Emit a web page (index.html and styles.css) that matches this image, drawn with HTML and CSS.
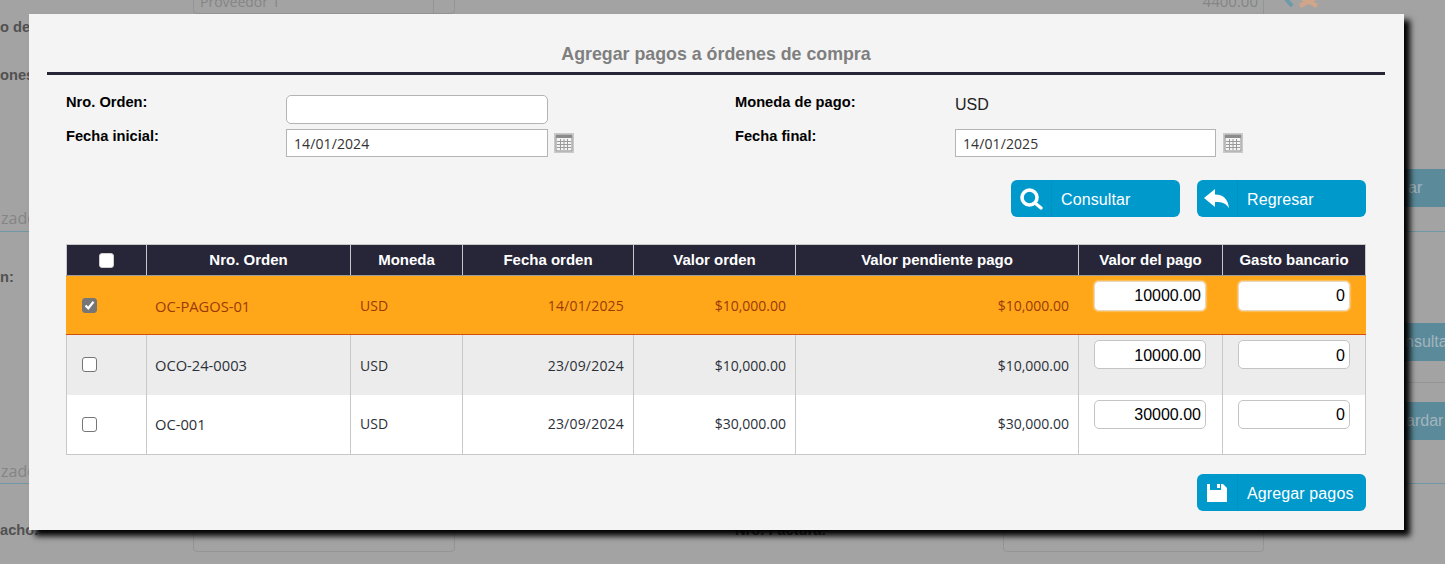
FILE: index.html
```html
<!DOCTYPE html>
<html lang="es">
<head>
<meta charset="utf-8">
<title>Agregar pagos a órdenes de compra</title>
<link rel="stylesheet" href="styles.css">
</head>
<body>
<div class="backdrop" aria-hidden="true">
  <span class="bg-text bg-l1">o de</span>
  <span class="bg-text bg-l2">ones</span>
  <span class="bg-soft bg-l3">zado</span>
  <span class="bg-text bg-l4">n:</span>
  <span class="bg-soft bg-l5">zado</span>
  <span class="bg-text bg-l6">acho.</span>
  <i class="bg-line bg-line1"></i>
  <i class="bg-line bg-line2"></i>
  <i class="bg-field bg-f1"><span>Proveedor 1</span></i>
  <i class="bg-field bg-f2"><span>4400.00</span></i>
  <i class="bg-field bg-f3"></i>
  <i class="bg-field bg-f4"></i>
  <span class="bg-text bg-mid">Nro. Factura:</span>
  <svg class="bg-icons" width="36" height="8" viewBox="0 0 36 8"><path d="M3 -1l6 7" stroke="#6d9aa8" stroke-width="4"/><path d="M17 -3l17 9M34 -3L17 6" stroke="#d0a58a" stroke-width="4.500"/></svg>
  <b class="bg-btn bg-b1">ar</b>
  <b class="bg-btn bg-b2">nsulta</b>
  <b class="bg-btn bg-b3">ardar</b>
  <i class="bg-line bg-line3"></i>
  <i class="bg-line bg-line4"></i>
  <i class="bg-line bg-line5"></i>
</div>

<section class="modal">
  <h1 class="modal-title">Agregar pagos a órdenes de compra</h1>

  <div class="filters">
    <label class="field-label">Nro. Orden:</label>
    <input class="txt round" type="text">
    <label class="field-label">Moneda de pago:</label>
    <div class="static-value">USD</div>

    <label class="field-label">Fecha inicial:</label>
    <div class="date-wrap">
      <input class="txt date" type="text" value="14/01/2024">
      <svg class="cal" width="20" height="20" viewBox="0 0 20 20"><rect x=".5" y=".5" width="19" height="19" fill="#e3e3e3" stroke="#c9c9c9"/><rect x="2" y="2" width="16" height="16" fill="#f4f4f4" stroke="#8b8b8b"/><rect x="2" y="2" width="16" height="3" fill="#8b8b8b"/><path d="M3 8.500h14M3 11.500h14M3 14.500h14M6.500 6v11M10 6v11M13.500 6v11" stroke="#9a9a9a" fill="none"/></svg>
    </div>
    <label class="field-label">Fecha final:</label>
    <div class="date-wrap wide-gap">
      <input class="txt date narrow" type="text" value="14/01/2025">
      <svg class="cal" width="20" height="20" viewBox="0 0 20 20"><rect x=".5" y=".5" width="19" height="19" fill="#e3e3e3" stroke="#c9c9c9"/><rect x="2" y="2" width="16" height="16" fill="#f4f4f4" stroke="#8b8b8b"/><rect x="2" y="2" width="16" height="3" fill="#8b8b8b"/><path d="M3 8.500h14M3 11.500h14M3 14.500h14M6.500 6v11M10 6v11M13.500 6v11" stroke="#9a9a9a" fill="none"/></svg>
    </div>
  </div>

  <div class="actions">
    <button class="btn" type="button">
      <span class="btn-icon"><svg width="24" height="24" viewBox="0 0 24 24"><circle cx="10.500" cy="10.500" r="7.500" fill="none" stroke="#fff" stroke-width="3.600"/><path d="M16 16l6 5" stroke="#fff" stroke-width="3.400" stroke-linecap="round"/></svg></span>
      <span class="btn-label">Consultar</span>
    </button>
    <button class="btn" type="button">
      <span class="btn-icon"><svg width="26" height="20" viewBox="0 0 26 20"><path d="M0 9L11 0v5.500c8 0 13 4 14 14-2.500-5-6-6.500-14-6.500v5z" fill="#fff"/></svg></span>
      <span class="btn-label">Regresar</span>
    </button>
  </div>

  <table class="grid">
    <colgroup>
      <col class="c1"><col class="c2"><col class="c3"><col class="c4"><col class="c5"><col class="c6"><col class="c7"><col class="c8">
    </colgroup>
    <thead>
      <tr>
        <th><span class="check head-check"></span></th>
        <th>Nro. Orden</th>
        <th>Moneda</th>
        <th>Fecha orden</th>
        <th>Valor orden</th>
        <th>Valor pendiente pago</th>
        <th>Valor del pago</th>
        <th>Gasto bancario</th>
      </tr>
    </thead>
    <tbody>
      <tr class="selected">
        <td class="ctr"><span class="check checked"><svg width="11" height="10" viewBox="0 0 11 10"><path d="M1.500 5.500l2.800 2.800 5.200-6.600" fill="none" stroke="#fff" stroke-width="2.200"/></svg></span></td>
        <td class="code">OC-PAGOS-01</td>
        <td>USD</td>
        <td class="num date-cell">14/01/2025</td>
        <td class="num">$10,000.00</td>
        <td class="num">$10,000.00</td>
        <td class="inp"><input class="cell-input" type="text" value="10000.00"></td>
        <td class="inp"><input class="cell-input" type="text" value="0"></td>
      </tr>
      <tr class="alt">
        <td class="ctr"><span class="check"></span></td>
        <td class="code">OCO-24-0003</td>
        <td>USD</td>
        <td class="num date-cell">23/09/2024</td>
        <td class="num">$10,000.00</td>
        <td class="num">$10,000.00</td>
        <td class="inp"><input class="cell-input" type="text" value="10000.00"></td>
        <td class="inp"><input class="cell-input" type="text" value="0"></td>
      </tr>
      <tr class="plain">
        <td class="ctr"><span class="check"></span></td>
        <td class="code">OC-001</td>
        <td>USD</td>
        <td class="num date-cell">23/09/2024</td>
        <td class="num">$30,000.00</td>
        <td class="num">$30,000.00</td>
        <td class="inp"><input class="cell-input" type="text" value="30000.00"></td>
        <td class="inp"><input class="cell-input" type="text" value="0"></td>
      </tr>
    </tbody>
  </table>

  <div class="actions bottom">
    <button class="btn" type="button">
      <span class="btn-icon"><svg width="20" height="20" viewBox="0 0 20 20"><path d="M0 1h3v6h11V1h2l4 4v14H0z" fill="#fff"/><rect x="10" y="1" width="3" height="4" fill="#fff"/></svg></span>
      <span class="btn-label">Agregar pagos</span>
    </button>
  </div>
</section>
</body>
</html>
```
FILE: styles.css
```css
* { box-sizing: border-box; }
html, body { margin: 0; height: 564px; overflow: hidden; }
body { background: #a3a3a3; font-family: "Liberation Sans", Arial, sans-serif; position: relative; }

/* dimmed page behind the dialog */
.backdrop { position: absolute; inset: 0; overflow: hidden; }
.backdrop > * { position: absolute; }
.bg-text { font-size: 14.670px; font-weight: 700; color: #515151; line-height: 16px; white-space: nowrap; }
.bg-soft { font-family: "Open Sans", sans-serif; font-size: 16px; color: #858585; line-height: 18px; }
.bg-l1 { left: 0; top: 19px; }
.bg-l2 { left: 0; top: 67px; }
.bg-l3 { left: 1px; top: 209px; }
.bg-l4 { left: 0; top: 269px; }
.bg-l5 { left: 1px; top: 462px; }
.bg-l6 { left: 0; top: 522px; }
.bg-mid { left: 735px; top: 522px; color: #333; }
.bg-line { height: 1px; background: #6f97a6; }
.bg-line1 { left: 0; top: 231px; width: 29px; }
.bg-line2 { left: 0; top: 483px; width: 29px; }
.bg-line3 { left: 1404px; top: 231px; width: 41px; }
.bg-line4 { left: 1404px; top: 382px; width: 41px; background: #959595; }
.bg-line5 { left: 1404px; top: 483px; width: 41px; }
.bg-field { width: 262px; border: 1px solid #959595; border-radius: 4px; font-style: normal; font-family: "Open Sans", sans-serif; font-size: 14px; color: #858585; }
.bg-f1 { left: 193px; top: -14px; height: 28px; padding: 5px 6px; line-height: 20px; }
.bg-f1::after { content: ""; position: absolute; left: 239px; top: 0; bottom: 0; width: 1px; background: #959595; }
.bg-f2 { left: 1003px; top: -14px; height: 28px; width: 261px; padding: 5px 5px; font-size: 15px; line-height: 20px; text-align: right; border-top: 0; border-left: 0; border-bottom: 0; border-radius: 0; }
.bg-f3 { left: 193px; top: 524px; height: 28px; }
.bg-f4 { left: 1003px; top: 524px; height: 28px; width: 261px; }
.bg-icons { left: 1283px; top: 0; }
.bg-btn { left: 1404px; width: 41px; height: 38px; background: #5b8a9b; font-weight: 400; font-size: 16px; line-height: 38px; color: #a3b5bc; white-space: nowrap; overflow: hidden; }
.bg-b1 { top: 169px; padding-left: 4px; }
.bg-b2 { top: 323px; padding-left: 1px; }
.bg-b3 { top: 402px; padding-left: 2px; }

/* dialog */
.modal {
  position: absolute; left: 29px; top: 14px;
  width: 1375px; height: 516px;
  padding: 0 19px 0 18px;
  background: #f4f4f4;
  box-shadow: 6px 6px 6px #000;
  color: #000;
}
.modal-title {
  margin: 0;
  height: 61px;
  padding-top: 30px;
  border-bottom: 3px solid #272639;
  font-size: 17.800px; line-height: 20px; font-weight: 700;
  color: #7f7f7f; text-align: center;
}

.filters {
  display: grid;
  grid-template-columns: 220px 449px 220px 1fr;
  grid-template-rows: 29px 28px;
  row-gap: 5px;
  margin: 20px 0 0 19px;
  align-items: start;
}
.field-label { font-size: 14.670px; font-weight: 700; line-height: 16px; margin-top: -1px; }
.static-value { font-size: 16px; line-height: 20px; color: #222; }
.txt { display: block; width: 262px; height: 29px; background: #fff; border: 1px solid #b4b4b4; padding: 1px 7px 0; font-family: "Open Sans", sans-serif; font-size: 14px; letter-spacing: .1px; color: #333; outline: none; }
.txt.round { border-radius: 5px; }
.txt.date { height: 28px; }
.txt.narrow { width: 261px; }
.date-wrap { display: flex; align-items: center; gap: 6px; }
.date-wrap.wide-gap { gap: 7px; }
.cal { flex: none; }

.actions { display: flex; justify-content: flex-end; gap: 17px; margin: 23px 19px 0 0; }
.actions.bottom { margin-top: 19px; }
.btn {
  display: flex; align-items: center;
  width: 169px; height: 37px; padding: 0;
  background: #0099cc; border: 0; border-radius: 6px;
  color: #fff; font: 16px/20px "Liberation Sans", Arial, sans-serif;
  text-align: left;
}
.btn-icon {
  flex: none; display: flex; align-items: center; justify-content: center;
  width: 40px; height: 100%;
  margin-right: 10px;
  box-shadow: 1px 0 0 rgba(0, 110, 160, .2);
}
.btn-label { margin-top: 2px; letter-spacing: .12px; }

.grid {
  width: 1299px; margin: 27px 0 0 19px;
  border-collapse: collapse; table-layout: fixed;
  border: 1px solid #c8c8c8;
}
.c1 { width: 80px; } .c2 { width: 204px; } .c3 { width: 112px; } .c4 { width: 171px; }
.c5 { width: 162px; } .c6 { width: 283px; } .c7 { width: 144px; } .c8 { width: 143px; }
.grid th {
  height: 31px; padding: 0;
  background: #272639; color: #fff;
  font-size: 15px; font-weight: 700; line-height: 16px; text-align: center;
  border-left: 1px solid #c8c8c8; border-right: 1px solid #c8c8c8; border-bottom: 1px solid #9b9b9b;
}
.grid td {
  height: 60px; padding: 0 9px;
  font-family: "Open Sans", sans-serif; font-size: 14px; line-height: 20px; color: #2b3038;
  border-left: 1px solid #c8c8c8; border-right: 1px solid #c8c8c8;
  white-space: nowrap;
}
.grid td.num { text-align: right; }
.grid td.code { font-size: 14.700px; padding-left: 8px; padding-bottom: 1px; }
.grid td.date-cell { letter-spacing: .2px; }
.grid tr.selected td { height: 59px; padding-top: 2px; background: #ffa719; color: #9a3a06; border-left-color: #ffa719; border-right-color: #ffa719; border-bottom: 1px solid #d4500f; }
.grid tr.alt td { padding-top: 2px; background: #ececec; }
.grid tr.plain td { background: #fff; }
.grid tr td.ctr { padding: 0 0 0 15px; }
.grid tr td.inp { vertical-align: top; padding: 5px 15px 0; }
.grid tr.selected .cell-input { height: 30px; padding-top: 0; border-color: #e6d7bd; box-shadow: 0 0 2px #fff; }

.check { display: block; width: 15px; height: 15px; background: #fff; border: 1px solid #767676; border-radius: 3px; }
.check.checked { background: #767676; display: flex; align-items: center; justify-content: center; }
.check.head-check { margin: 0 auto 0 32px; border-color: #cfcfcf; }
.cell-input {
  display: block; width: 112px; height: 29px; padding: 2px 4px 0;
  border: 1px solid #c4c4c4; border-radius: 5px; background: #fff;
  font: 16px/20px "Liberation Sans", Arial, sans-serif; color: #000; text-align: right; outline: none;
}
```
